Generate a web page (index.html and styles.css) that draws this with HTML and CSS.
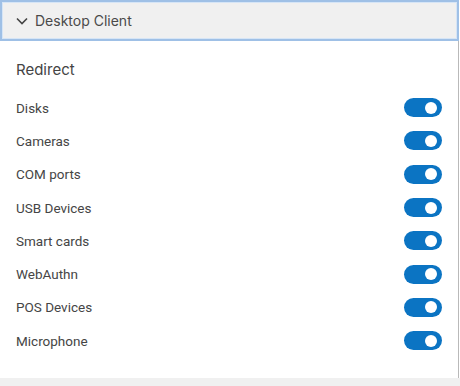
FILE: index.html
```html
<!DOCTYPE html>
<html lang="en">
<head>
    <meta charset="UTF-8">
    <title>Desktop Client</title>
    <link rel="stylesheet" href="styles.css">
</head>
<body>
    <div class="panel">
        <button class="panel-header">
            <svg class="chevron" viewBox="0 0 12 8"><path d="M1 1.5 L6 6.5 L11 1.5" stroke="#444" stroke-width="1.6" fill="none"/></svg>
            <span>Desktop Client</span>
        </button>

        <div class="panel-body">
            <h2 class="section-title">Redirect</h2>
            <div class="option-list">
                <div class="option-row"><span class="option-label">Disks</span><span class="toggle"></span></div>
                <div class="option-row"><span class="option-label">Cameras</span><span class="toggle"></span></div>
                <div class="option-row"><span class="option-label">COM ports</span><span class="toggle"></span></div>
                <div class="option-row"><span class="option-label">USB Devices</span><span class="toggle"></span></div>
                <div class="option-row"><span class="option-label">Smart cards</span><span class="toggle"></span></div>
                <div class="option-row"><span class="option-label">WebAuthn</span><span class="toggle"></span></div>
                <div class="option-row"><span class="option-label">POS Devices</span><span class="toggle"></span></div>
                <div class="option-row"><span class="option-label">Microphone</span><span class="toggle"></span></div>
            </div>
        </div>
    </div>
    <div class="footer-strip"></div>
</body>
</html>
```

FILE: styles.css
```css
body {
    margin: 0;
    font-family: Inter, "Open Sans", sans-serif;
    background-color: #fff;
    color: #444;
    width: 460px;
    height: 386px;
    overflow: hidden;
}

.panel {
    width: 459px;
    border-right: 1px solid #b9b9b9;
    height: 378px;
    box-sizing: border-box;
}

.panel-header {
    display: flex;
    align-items: center;
    gap: 7px;
    width: 459px;
    height: 41px;
    box-sizing: border-box;
    padding: 0 0 0 14px;
    background-color: #f0f0f0;
    border: 2px solid #9fc0e6;
    box-shadow: inset 0 0 0 1px #d6e5f6;
    font-family: Inter, sans-serif;
    font-size: 14px;
    color: #4a4a4a;
    text-align: left;
}

.chevron {
    width: 12px;
    height: 8px;
}

.panel-body {
    padding: 19px 16px 0 16px;
}

.section-title {
    margin: 0 0 12px 0;
    font-size: 15px;
    font-weight: 400;
    color: #444;
}

.option-list {
    display: flex;
    flex-direction: column;
}

.option-row {
    display: flex;
    justify-content: space-between;
    align-items: center;
    height: 33.3px;
}

.option-label {
    font-family: Roboto, sans-serif;
    font-size: 13.5px;
    color: #454545;
}

.toggle {
    position: relative;
    width: 38px;
    height: 19px;
    border-radius: 10px;
    background-color: #0b74c3;
}

/* knob */
.toggle::after {
    content: "";
    position: absolute;
    top: 3.5px;
    right: 5px;
    width: 12px;
    height: 12px;
    border-radius: 50%;
    background-color: #fff;
}

.footer-strip {
    height: 8px;
    background-color: #f0f0f0;
}
```
